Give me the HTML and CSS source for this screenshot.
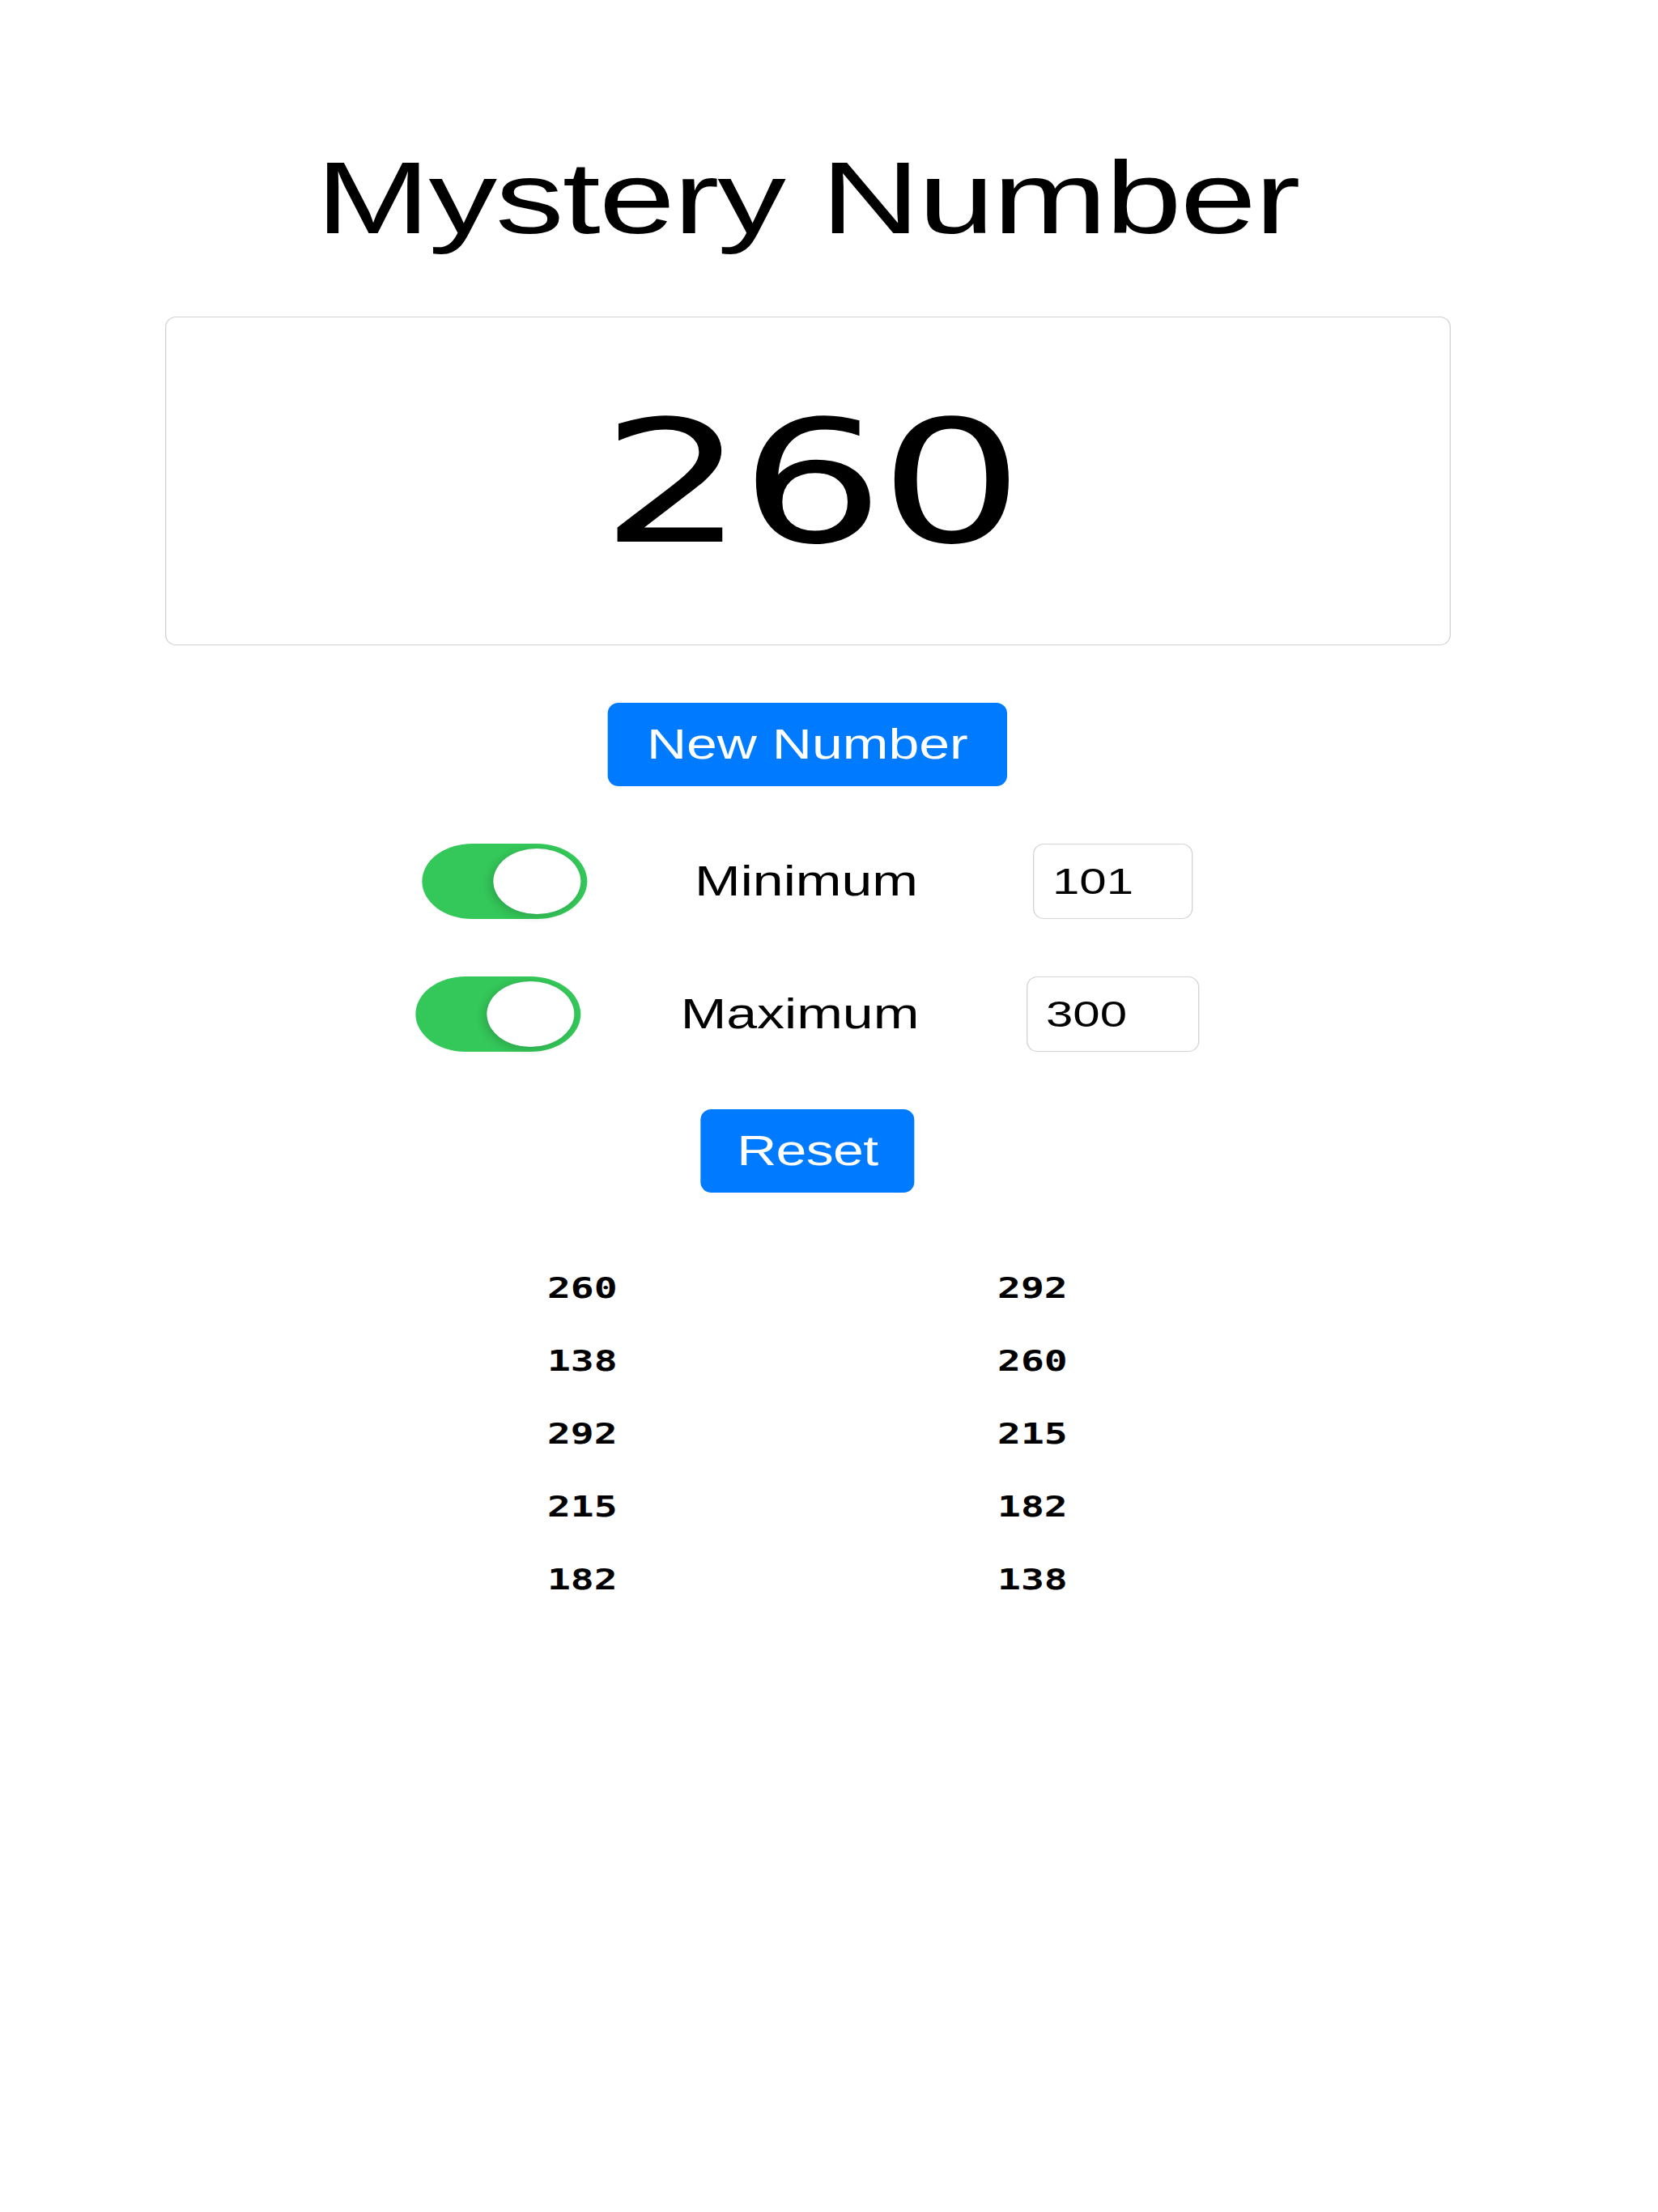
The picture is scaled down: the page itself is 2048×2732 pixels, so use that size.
FILE: index.html
```html
<!DOCTYPE html>
<html lang="en">
<head>
<meta charset="utf-8">
<title>Mystery Number</title>
<link rel="stylesheet" href="styles.css">
</head>
<body>
<main class="page">
  <h1 class="title">Mystery Number</h1>
  <section class="display"><span class="display-value">260</span></section>
  <button class="btn" type="button">New Number</button>
  <div class="range-row">
    <div class="switch"><span class="switch-knob"></span></div>
    <span class="range-label">Minimum</span>
    <input class="field field-min" type="text" value="101">
  </div>
  <div class="range-row">
    <div class="switch"><span class="switch-knob"></span></div>
    <span class="range-label">Maximum</span>
    <input class="field field-max" type="text" value="300">
  </div>
  <button class="btn btn-narrow" type="button">Reset</button>
  <div class="history">
    <ul class="history-col">
      <li>260</li>
      <li>138</li>
      <li>292</li>
      <li>215</li>
      <li>182</li>
    </ul>
    <ul class="history-col">
      <li>292</li>
      <li>260</li>
      <li>215</li>
      <li>182</li>
      <li>138</li>
    </ul>
  </div>
</main>
</body>
</html>
```
FILE: styles.css
```css
html, body {
  margin: 0;
  padding: 0;
  background: #ffffff;
}

body {
  width: 2048px;
  min-height: 2732px;
  overflow: hidden;
  font-family: "Liberation Sans", Arial, sans-serif;
  color: #000;
}

.page {
  width: 1496px;
  min-height: 2732px;
  box-sizing: border-box;
  padding-top: 168px;
  display: flex;
  flex-direction: column;
  align-items: center;
  gap: 71px;
  transform: scaleX(1.33333);
  transform-origin: 0 0;
}

.title {
  margin: 0;
  font-size: 127px;
  font-weight: 400;
  line-height: 152px;
  height: 152px;
  letter-spacing: -1.5px;
  white-space: nowrap;
}

.display {
  width: 1191px;
  height: 406px;
  box-sizing: border-box;
  border: 1px solid #d2d2d2;
  border-radius: 10px / 13px;
  display: flex;
  align-items: center;
  justify-content: center;
}

.display-value {
  font-family: "DejaVu Sans", "Liberation Sans", sans-serif;
  font-size: 210px;
  line-height: 210px;
  letter-spacing: -4.5px;
  margin: 6px -4.5px 0 0;
}

.btn {
  height: 103px;
  padding: 0 36px;
  border: none;
  border-radius: 10px / 13px;
  background: #007aff;
  color: #fff;
  font-family: "Liberation Sans", Arial, sans-serif;
  font-size: 51px;
  line-height: 1;
  display: flex;
  align-items: center;
  justify-content: center;
  margin: 0;
}

.btn-narrow {
  padding: 0 34px;
  letter-spacing: -0.5px;
}

.range-row {
  display: flex;
  align-items: center;
  height: 93px;
}

.switch {
  width: 153px;
  height: 93px;
  box-sizing: border-box;
  padding: 6px;
  border-radius: 47px;
  background: #34c759;
  display: flex;
  justify-content: flex-end;
  align-items: center;
}

.switch-knob {
  width: 81px;
  height: 81px;
  border-radius: 50%;
  background: #fff;
  box-shadow: -3px 3px 9px rgba(0, 0, 0, 0.16), 0 0 1px rgba(0, 0, 0, 0.08);
}

.range-label {
  width: 300px;
  margin: 0 60px 0 53px;
  text-align: center;
  font-size: 51px;
  line-height: 1;
}

.field {
  height: 93px;
  box-sizing: border-box;
  margin: 0;
  padding: 0 0 0 17px;
  border: 1px solid #d4d4d4;
  border-radius: 10px / 13px;
  background: #fff;
  color: #000;
  font-family: "Liberation Sans", Arial, sans-serif;
  font-size: 45px;
  outline: none;
}

.field-min {
  width: 148px;
}

.field-max {
  width: 160px;
}

.history {
  display: flex;
  gap: 352px;
  margin-top: 2px;
}

.history-col {
  list-style: none;
  margin: 0;
  padding: 0;
  font-family: "DejaVu Sans Mono", "Liberation Mono", monospace;
  font-weight: 700;
  font-size: 36px;
  line-height: 90px;
}
```
